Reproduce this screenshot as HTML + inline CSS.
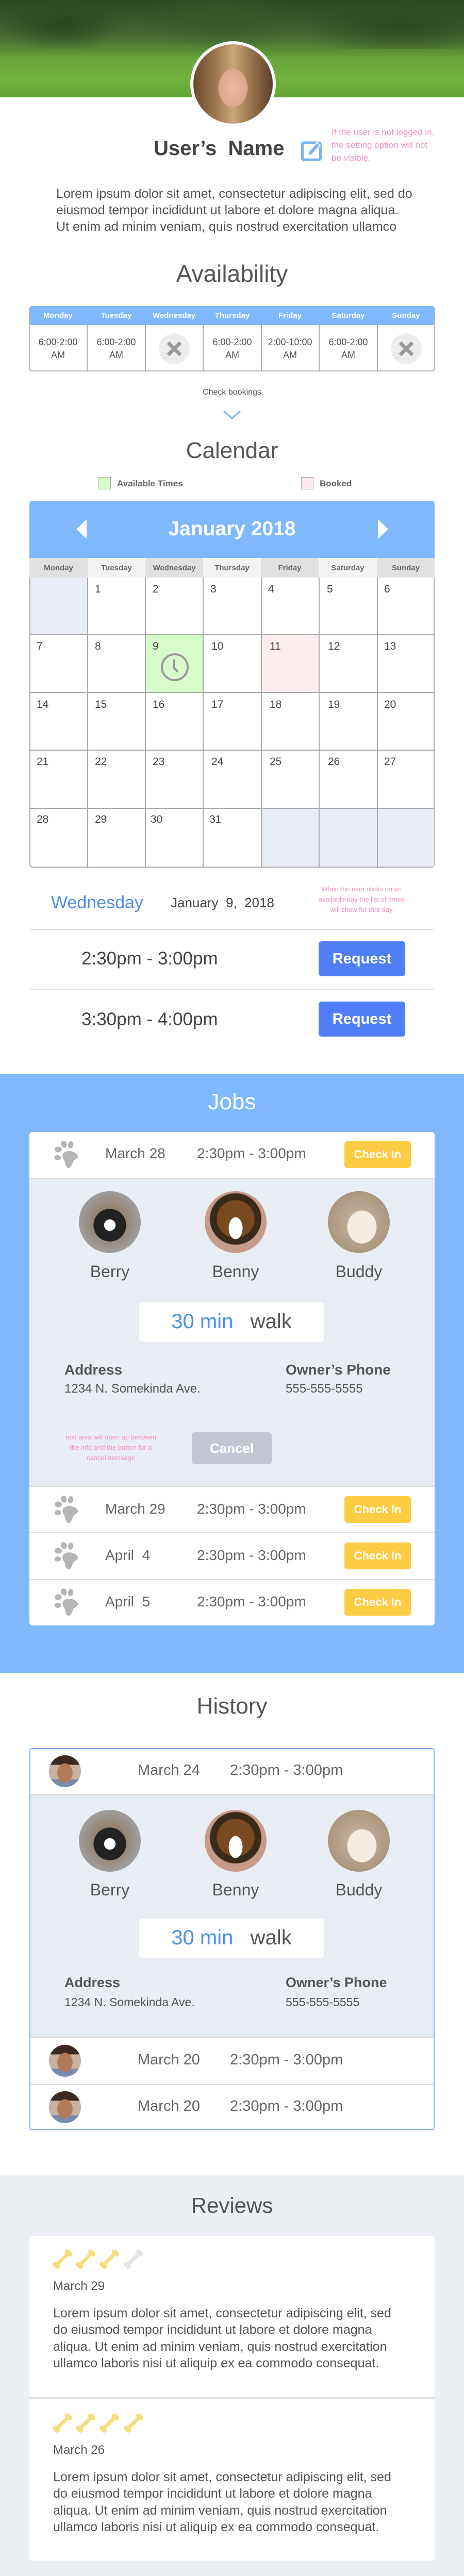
<!DOCTYPE html>
<html><head><meta charset="utf-8">
<style>
*{margin:0;padding:0;box-sizing:border-box}
html,body{width:900px;height:5133px;overflow:hidden}
body{position:relative;background:#fff;font-family:"Liberation Sans",sans-serif;color:#555}
.a{position:absolute}
.t{position:absolute;white-space:nowrap;line-height:1}
.c{left:0;width:900px;text-align:center}
.btn{position:absolute;border-radius:6px;color:#fff;font-weight:bold;text-align:center}
.ci{background:#fdcc44;font-size:22px}
.dog{position:absolute;width:120px;height:120px;border-radius:50%}
.grid div{position:absolute}
</style></head><body>

<div class="a" style="left:0;top:0;width:900px;height:189px;background:linear-gradient(180deg,#2c4a22 0%,#3f6330 30%,#4d7a35 45%,#6aa53b 60%,#6fb23d 80%,#62a536 100%)"></div>
<div class="a" style="left:0;top:0;width:900px;height:95px;background:radial-gradient(ellipse 120px 55px at 120px 45px,#29461d,transparent),radial-gradient(ellipse 160px 60px at 430px 35px,#355a28,transparent),radial-gradient(ellipse 200px 70px at 780px 45px,#2a4a20,transparent)"></div>
<div class="a" style="left:369px;top:80px;width:166px;height:166px;border-radius:50%;background:#fff"></div>
<div class="a" style="left:375px;top:86px;width:154px;height:154px;border-radius:50%;background:radial-gradient(ellipse 40px 52px at 50% 55%,#e8b9a0 0%,#dea58c 70%,transparent 72%),linear-gradient(90deg,#6b4a2c,#a07a52 30%,#c9a877 50%,#a07a52 70%,#5a3e26)"></div>

<div class="t" style="left:298px;top:268px;font-size:40px;font-weight:bold;color:#444">User’s&nbsp; Name</div>
<svg class="a" style="left:584px;top:271px" width="42" height="42" viewBox="0 0 42 42"><rect x="2.5" y="6" width="35" height="33" rx="3" fill="none" stroke="#7ab3f5" stroke-width="5"/><path d="M13 31 L15 23 L31 5 L37 11 L21 29 Z" fill="#7ab3f5" stroke="#fff" stroke-width="2"/></svg>
<div class="t" style="left:643px;top:244px;font-size:17px;line-height:25px;color:#f590c3">If the user is not logged in,<br>the setting option will not<br>be visible.</div>

<div class="t" style="left:109px;top:360px;font-size:25px;line-height:32px;color:#555">Lorem ipsum dolor sit amet, consectetur adipiscing elit, sed do<br>eiusmod tempor incididunt ut labore et dolore magna aliqua.<br>Ut enim ad minim veniam, quis nostrud exercitation ullamco</div>

<div class="t c" style="top:508px;font-size:46px;color:#555">Availability</div>

<div class="a" style="left:56px;top:594px;width:788px;height:127px;border:2px solid #b5b5b5;border-top:none;border-radius:6px;overflow:hidden">
 <div class="a" style="left:0;top:0;width:788px;height:37px;background:#7fb8fd"></div>
</div>
<div class="grid">
<div class="t" style="left:56px;top:605px;width:113px;text-align:center;color:#fff;font-weight:bold;font-size:15px">Monday</div>
<div class="t" style="left:169px;top:605px;width:113px;text-align:center;color:#fff;font-weight:bold;font-size:15px">Tuesday</div>
<div class="t" style="left:281px;top:605px;width:113px;text-align:center;color:#fff;font-weight:bold;font-size:15px">Wednesday</div>
<div class="t" style="left:394px;top:605px;width:113px;text-align:center;color:#fff;font-weight:bold;font-size:15px">Thursday</div>
<div class="t" style="left:506px;top:605px;width:113px;text-align:center;color:#fff;font-weight:bold;font-size:15px">Friday</div>
<div class="t" style="left:619px;top:605px;width:113px;text-align:center;color:#fff;font-weight:bold;font-size:15px">Saturday</div>
<div class="t" style="left:731px;top:605px;width:113px;text-align:center;color:#fff;font-weight:bold;font-size:15px">Sunday</div>
<div style="left:168px;top:631px;width:2px;height:89px;background:#aaa"></div>
<div style="left:281px;top:631px;width:2px;height:89px;background:#aaa"></div>
<div style="left:393px;top:631px;width:2px;height:89px;background:#aaa"></div>
<div style="left:506px;top:631px;width:2px;height:89px;background:#aaa"></div>
<div style="left:618px;top:631px;width:2px;height:89px;background:#aaa"></div>
<div style="left:731px;top:631px;width:2px;height:89px;background:#aaa"></div>
<div class="t" style="left:56px;top:652px;width:113px;text-align:center;font-size:18px;line-height:25px;color:#555">6:00-2:00<br>AM</div>
<div class="t" style="left:169px;top:652px;width:113px;text-align:center;font-size:18px;line-height:25px;color:#555">6:00-2:00<br>AM</div>
<div class="t" style="left:394px;top:652px;width:113px;text-align:center;font-size:18px;line-height:25px;color:#555">6:00-2:00<br>AM</div>
<div class="t" style="left:506px;top:652px;width:113px;text-align:center;font-size:18px;line-height:25px;color:#555">2:00-10:00<br>AM</div>
<div class="t" style="left:619px;top:652px;width:113px;text-align:center;font-size:18px;line-height:25px;color:#555">6:00-2:00<br>AM</div>
</div>
<svg class="a" style="left:307px;top:646px" width="62" height="62"><circle cx="31" cy="31" r="30" fill="#ececec"/><path d="M19 19 L43 43 M43 19 L19 43" stroke="#999" stroke-width="7"/></svg>
<svg class="a" style="left:757px;top:646px" width="62" height="62"><circle cx="31" cy="31" r="30" fill="#ececec"/><path d="M19 19 L43 43 M43 19 L19 43" stroke="#999" stroke-width="7"/></svg>

<div class="t c" style="top:754px;font-size:16px;color:#555">Check bookings</div>
<svg class="a" style="left:432px;top:796px" width="36" height="20"><path d="M2 2 L18 16 L34 2" fill="none" stroke="#7ab3f5" stroke-width="3"/></svg>

<div class="t c" style="top:853px;font-size:44px;color:#555">Calendar</div>
<div class="a" style="left:191px;top:926px;width:24px;height:24px;background:#d5fcc9;border:1.5px solid #aaa"></div>
<div class="t" style="left:227px;top:930px;font-size:17px;font-weight:bold;color:#666">Available Times</div>
<div class="a" style="left:584px;top:926px;width:24px;height:24px;background:#fdeaec;border:1.5px solid #aaa"></div>
<div class="t" style="left:620px;top:930px;font-size:17px;font-weight:bold;color:#666">Booked</div>

<div class="a" style="left:57px;top:972px;width:786px;height:111px;background:#7fb8fd;border-radius:6px 6px 0 0"></div>
<svg class="a" style="left:148px;top:1008px" width="22" height="38"><path d="M20 0 L0 19 L20 38 Z" fill="#fff"/></svg>
<svg class="a" style="left:731px;top:1008px" width="22" height="38"><path d="M2 0 L22 19 L2 38 Z" fill="#fff"/></svg>
<div class="t c" style="top:1007px;font-size:39px;font-weight:bold;color:#fff">January 2018</div>
<div class="grid" style="font-size:15px;font-weight:bold;color:#666">
<div style="left:57px;top:1083px;width:113px;height:38px;background:#e0e0e0"></div>
<div style="left:170px;top:1083px;width:112px;height:38px;background:#f3f3f3"></div>
<div style="left:282px;top:1083px;width:112px;height:38px;background:#e0e0e0"></div>
<div style="left:394px;top:1083px;width:112px;height:38px;background:#f3f3f3"></div>
<div style="left:506px;top:1083px;width:112px;height:38px;background:#e0e0e0"></div>
<div style="left:618px;top:1083px;width:113px;height:38px;background:#f3f3f3"></div>
<div style="left:731px;top:1083px;width:112px;height:38px;background:#e0e0e0"></div>
<div class="t" style="left:57px;top:1095px;width:113px;text-align:center">Monday</div>
<div class="t" style="left:170px;top:1095px;width:112px;text-align:center">Tuesday</div>
<div class="t" style="left:282px;top:1095px;width:112px;text-align:center">Wednesday</div>
<div class="t" style="left:394px;top:1095px;width:112px;text-align:center">Thursday</div>
<div class="t" style="left:506px;top:1095px;width:112px;text-align:center">Friday</div>
<div class="t" style="left:618px;top:1095px;width:113px;text-align:center">Saturday</div>
<div class="t" style="left:731px;top:1095px;width:112px;text-align:center">Sunday</div>
</div>
<div class="a" style="left:57px;top:1121px;width:786px;height:563px;border:2px solid #aaa;border-top:none;border-radius:0 0 6px 6px"></div>
<div class="grid">
<div style="left:59px;top:1121px;width:110px;height:111px;background:#e8ecf4"></div>
<div style="left:282px;top:1233px;width:111px;height:111px;background:#d5fcc9"></div>
<div style="left:507px;top:1233px;width:111px;height:111px;background:#fdeced"></div>
<div style="left:507px;top:1570px;width:335px;height:112px;background:#e8ecf4"></div>
<div style="left:169px;top:1121px;width:2px;height:562px;background:#aaa"></div>
<div style="left:281px;top:1121px;width:2px;height:562px;background:#aaa"></div>
<div style="left:393px;top:1121px;width:2px;height:562px;background:#aaa"></div>
<div style="left:506px;top:1121px;width:2px;height:562px;background:#aaa"></div>
<div style="left:618px;top:1121px;width:2px;height:562px;background:#aaa"></div>
<div style="left:731px;top:1121px;width:2px;height:562px;background:#aaa"></div>
<div style="left:57px;top:1231px;width:786px;height:2px;background:#aaa"></div>
<div style="left:57px;top:1343px;width:786px;height:2px;background:#aaa"></div>
<div style="left:57px;top:1455px;width:786px;height:2px;background:#aaa"></div>
<div style="left:57px;top:1568px;width:786px;height:2px;background:#aaa"></div>
</div>
<svg class="a" style="left:311px;top:1267px" width="56" height="56"><circle cx="28" cy="28" r="25" fill="none" stroke="#999" stroke-width="4"/><path d="M27 13 L27 30 L34 37" fill="none" stroke="#999" stroke-width="4"/></svg>
<div class="grid" style="font-size:21px;color:#444">
<div class="t" style="left:184px;top:1133px">1</div><div class="t" style="left:296px;top:1133px">2</div><div class="t" style="left:408px;top:1133px">3</div><div class="t" style="left:520px;top:1133px">4</div><div class="t" style="left:634px;top:1133px">5</div><div class="t" style="left:745px;top:1133px">6</div>
<div class="t" style="left:71px;top:1244px">7</div><div class="t" style="left:184px;top:1244px">8</div><div class="t" style="left:296px;top:1244px">9</div><div class="t" style="left:410px;top:1244px">10</div><div class="t" style="left:523px;top:1244px">11</div><div class="t" style="left:636px;top:1244px">12</div><div class="t" style="left:745px;top:1244px">13</div>
<div class="t" style="left:71px;top:1357px">14</div><div class="t" style="left:184px;top:1357px">15</div><div class="t" style="left:296px;top:1357px">16</div><div class="t" style="left:410px;top:1357px">17</div><div class="t" style="left:523px;top:1357px">18</div><div class="t" style="left:636px;top:1357px">19</div><div class="t" style="left:745px;top:1357px">20</div>
<div class="t" style="left:71px;top:1468px">21</div><div class="t" style="left:184px;top:1468px">22</div><div class="t" style="left:296px;top:1468px">23</div><div class="t" style="left:410px;top:1468px">24</div><div class="t" style="left:523px;top:1468px">25</div><div class="t" style="left:636px;top:1468px">26</div><div class="t" style="left:745px;top:1468px">27</div>
<div class="t" style="left:71px;top:1580px">28</div><div class="t" style="left:184px;top:1580px">29</div><div class="t" style="left:292px;top:1580px">30</div><div class="t" style="left:406px;top:1580px">31</div>
</div>

<div class="t" style="left:99px;top:1735px;font-size:34px;color:#4a90e2">Wednesday</div>
<div class="t" style="left:331px;top:1739px;font-size:26px;color:#444">January&nbsp; 9,&nbsp; 2018</div>
<div class="t" style="left:590px;top:1716px;width:222px;text-align:center;font-size:13px;line-height:20px;color:#f590c3">When the user clicks on an<br>available day the list of times<br>will show for that day</div>
<div class="a" style="left:58px;top:1803px;width:783px;height:2px;background:#e2e2e2"></div>
<div class="t" style="left:158px;top:1843px;font-size:35px;color:#444">2:30pm - 3:00pm</div>
<div class="btn" style="left:618px;top:1827px;width:168px;height:68px;background:#4f7ef5;font-size:29px;line-height:68px">Request</div>
<div class="a" style="left:57px;top:1919px;width:786px;height:2px;background:#e2e2e2"></div>
<div class="t" style="left:158px;top:1961px;font-size:35px;color:#444">3:30pm - 4:00pm</div>
<div class="btn" style="left:618px;top:1944px;width:168px;height:68px;background:#4f7ef5;font-size:29px;line-height:68px">Request</div>

<div class="a" style="left:0;top:2085px;width:900px;height:1162px;background:#7fb8fd"></div>
<div class="t c" style="top:2117px;font-size:44px;color:#fff">Jobs</div>
<div class="a" style="left:57px;top:2197px;width:786px;height:958px;background:#fff;border-radius:6px;overflow:hidden">
 <div class="a" style="left:0;top:89px;width:786px;height:600px;background:#e8ecf3;border-top:2px solid #e0e0e0;border-bottom:2px solid #e0e0e0"></div>
 <div class="a" style="left:0;top:777px;width:786px;height:2px;background:#e2e2e2"></div>
 <div class="a" style="left:0;top:868px;width:786px;height:2px;background:#e2e2e2"></div>
</div>

<svg width="0" height="0" style="position:absolute;left:0;top:0"><defs><g id="paw" fill="#b5b5b5"><ellipse cx="14" cy="18" rx="7" ry="5.5"/><ellipse cx="25" cy="8" rx="5.5" ry="7" transform="rotate(-15 25 8)"/><ellipse cx="38" cy="9" rx="5" ry="7" transform="rotate(10 38 9)"/><ellipse cx="13" cy="34" rx="6.5" ry="5"/><path d="M26 24 C34 18 48 22 52 30 C54 34 48 36 44 40 C40 46 40 54 34 54 C28 54 28 44 26 40 C22 34 20 28 26 24 Z"/></g><g id="bone"><path d="M7 29 L29 7" stroke-width="7" stroke-linecap="round"/><circle cx="4" cy="28" r="4.5"/><circle cx="8" cy="32" r="4.5"/><circle cx="28" cy="4" r="4.5"/><circle cx="32" cy="8" r="4.5"/></g></defs></svg>
<svg class="a" style="left:99px;top:2213px" width="56" height="56"><use href="#paw"/></svg>
<div class="t" style="left:204px;top:2225px;font-size:28px;color:#666">March 28</div>
<div class="t" style="left:382px;top:2225px;font-size:28px;color:#666">2:30pm - 3:00pm</div>
<div class="btn ci" style="left:668px;top:2215px;width:129px;height:52px;line-height:52px">Check In</div>

<div class="dog" style="left:153px;top:2312px;background:radial-gradient(circle at 50% 55%,#fff 0 12%,#222 13% 35%,transparent 36%),radial-gradient(circle at 50% 50%,#8a6a4a,#a7b3c0)"></div>
<div class="dog" style="left:397px;top:2312px;background:radial-gradient(ellipse 22px 35px at 50% 60%,#fff 0 60%,transparent 62%),radial-gradient(circle at 50% 45%,#7a4a22 0 40%,#3a2a1a 42% 55%,#c79b8a 57%)"></div>
<div class="dog" style="left:636px;top:2312px;background:radial-gradient(ellipse 40px 45px at 55% 58%,#f3ece0 0 70%,transparent 72%),radial-gradient(circle at 50% 50%,#c8b8a0,#9c8a70)"></div>
<div class="t" style="left:143px;top:2452px;width:140px;text-align:center;font-size:32px;color:#555">Berry</div>
<div class="t" style="left:387px;top:2452px;width:140px;text-align:center;font-size:32px;color:#555">Benny</div>
<div class="t" style="left:626px;top:2452px;width:140px;text-align:center;font-size:32px;color:#555">Buddy</div>
<div class="a" style="left:270px;top:2527px;width:358px;height:77px;background:#fff;border-radius:6px"></div>
<div class="t" style="left:270px;top:2545px;width:358px;text-align:center;font-size:40px;color:#555"><span style="color:#4a90e2">30 min</span>&nbsp;&nbsp; walk</div>

<div class="t" style="left:125px;top:2645px;font-size:28px;font-weight:bold;color:#555">Address</div>
<div class="t" style="left:554px;top:2645px;font-size:28px;font-weight:bold;color:#555">Owner’s Phone</div>
<div class="t" style="left:125px;top:2684px;font-size:24px;color:#555">1234 N. Somekinda Ave.</div>
<div class="t" style="left:554px;top:2684px;font-size:24px;color:#555">555-555-5555</div>
<div class="t" style="left:100px;top:2780px;width:230px;text-align:center;font-size:13px;line-height:20px;color:#f590c3">text area will open up between<br>the info and the button for a<br>cancel message</div>
<div class="btn" style="left:372px;top:2780px;width:155px;height:62px;background:#c3c7d4;font-size:26px;line-height:62px">Cancel</div>

<svg class="a" style="left:99px;top:2902px" width="56" height="56"><use href="#paw"/></svg>
<div class="t" style="left:204px;top:2915px;font-size:28px;color:#666">March 29</div>
<div class="t" style="left:382px;top:2915px;font-size:28px;color:#666">2:30pm - 3:00pm</div>
<div class="btn ci" style="left:668px;top:2904px;width:129px;height:52px;line-height:52px">Check In</div>
<svg class="a" style="left:99px;top:2992px" width="56" height="56"><use href="#paw"/></svg>
<div class="t" style="left:204px;top:3005px;font-size:28px;color:#666">April&nbsp; 4</div>
<div class="t" style="left:382px;top:3005px;font-size:28px;color:#666">2:30pm - 3:00pm</div>
<div class="btn ci" style="left:668px;top:2994px;width:129px;height:52px;line-height:52px">Check In</div>
<svg class="a" style="left:99px;top:3082px" width="56" height="56"><use href="#paw"/></svg>
<div class="t" style="left:204px;top:3095px;font-size:28px;color:#666">April&nbsp; 5</div>
<div class="t" style="left:382px;top:3095px;font-size:28px;color:#666">2:30pm - 3:00pm</div>
<div class="btn ci" style="left:668px;top:3084px;width:129px;height:52px;line-height:52px">Check In</div>

<div class="t c" style="top:3290px;font-size:44px;color:#555">History</div>
<div class="a" style="left:57px;top:3393px;width:786px;height:742px;border:2px solid #7ab3f5;border-radius:5px;overflow:hidden;background:#fff">
 <div class="a" style="left:0;top:87px;width:786px;height:474px;background:#e8ecf3;border-top:2px solid #e0e0e0;border-bottom:2px solid #e0e0e0"></div>
 <div class="a" style="left:0;top:650px;width:786px;height:2px;background:#e2e2e2"></div>
</div>
<div class="a" style="left:95px;top:3407px;width:62px;height:62px;border-radius:50%;background:radial-gradient(ellipse 16px 20px at 50% 55%,#b07a5a 0 90%,transparent 95%),linear-gradient(180deg,#3a2a22 0 30%,#c9b0a0 30% 75%,#7a8aa8 75%)"></div>
<div class="t" style="left:267px;top:3422px;font-size:29px;color:#666">March 24</div>
<div class="t" style="left:446px;top:3422px;font-size:29px;color:#666">2:30pm - 3:00pm</div>
<div class="dog" style="left:153px;top:3513px;background:radial-gradient(circle at 50% 55%,#fff 0 12%,#222 13% 35%,transparent 36%),radial-gradient(circle at 50% 50%,#8a6a4a,#a7b3c0)"></div>
<div class="dog" style="left:397px;top:3513px;background:radial-gradient(ellipse 22px 35px at 50% 60%,#fff 0 60%,transparent 62%),radial-gradient(circle at 50% 45%,#7a4a22 0 40%,#3a2a1a 42% 55%,#c79b8a 57%)"></div>
<div class="dog" style="left:636px;top:3513px;background:radial-gradient(ellipse 40px 45px at 55% 58%,#f3ece0 0 70%,transparent 72%),radial-gradient(circle at 50% 50%,#c8b8a0,#9c8a70)"></div>
<div class="t" style="left:143px;top:3652px;width:140px;text-align:center;font-size:32px;color:#555">Berry</div>
<div class="t" style="left:387px;top:3652px;width:140px;text-align:center;font-size:32px;color:#555">Benny</div>
<div class="t" style="left:626px;top:3652px;width:140px;text-align:center;font-size:32px;color:#555">Buddy</div>
<div class="a" style="left:270px;top:3724px;width:358px;height:76px;background:#fff;border-radius:6px"></div>
<div class="t" style="left:270px;top:3741px;width:358px;text-align:center;font-size:40px;color:#555"><span style="color:#4a90e2">30 min</span>&nbsp;&nbsp; walk</div>
<div class="t" style="left:125px;top:3835px;font-size:27px;font-weight:bold;color:#555">Address</div>
<div class="t" style="left:554px;top:3835px;font-size:27px;font-weight:bold;color:#555">Owner’s Phone</div>
<div class="t" style="left:125px;top:3875px;font-size:23px;color:#555">1234 N. Somekinda Ave.</div>
<div class="t" style="left:554px;top:3875px;font-size:23px;color:#555">555-555-5555</div>
<div class="a" style="left:95px;top:3969px;width:62px;height:62px;border-radius:50%;background:radial-gradient(ellipse 16px 20px at 50% 55%,#b07a5a 0 90%,transparent 95%),linear-gradient(180deg,#3a2a22 0 30%,#c9b0a0 30% 75%,#7a8aa8 75%)"></div>
<div class="t" style="left:267px;top:3984px;font-size:29px;color:#666">March 20</div>
<div class="t" style="left:446px;top:3984px;font-size:29px;color:#666">2:30pm - 3:00pm</div>
<div class="a" style="left:95px;top:4059px;width:62px;height:62px;border-radius:50%;background:radial-gradient(ellipse 16px 20px at 50% 55%,#b07a5a 0 90%,transparent 95%),linear-gradient(180deg,#3a2a22 0 30%,#c9b0a0 30% 75%,#7a8aa8 75%)"></div>
<div class="t" style="left:267px;top:4074px;font-size:29px;color:#666">March 20</div>
<div class="t" style="left:446px;top:4074px;font-size:29px;color:#666">2:30pm - 3:00pm</div>

<div class="a" style="left:0;top:4221px;width:900px;height:830px;background:#eceff4"></div>
<div class="t c" style="top:4260px;font-size:42px;color:#555">Reviews</div>
<div class="a" style="left:57px;top:4340px;width:786px;height:630px;background:#fff;border-radius:6px"></div>
<div class="a" style="left:57px;top:4653px;width:786px;height:4px;background:#e2e2e2"></div>
<svg class="a" style="left:103px;top:4367px" width="190" height="40">
<use href="#bone" fill="#f6dd7c" stroke="#f6dd7c"/><use href="#bone" x="45" fill="#f6dd7c" stroke="#f6dd7c"/><use href="#bone" x="91" fill="#f6dd7c" stroke="#f6dd7c"/><use href="#bone" x="138" fill="#e4e4e4" stroke="#e4e4e4"/></svg>
<div class="t" style="left:103px;top:4426px;font-size:24px;color:#555">March 29</div>
<div class="t" style="left:103px;top:4474px;font-size:25px;line-height:32.4px;color:#555">Lorem ipsum dolor sit amet, consectetur adipiscing elit, sed<br>do eiusmod tempor incididunt ut labore et dolore magna<br>aliqua. Ut enim ad minim veniam, quis nostrud exercitation<br>ullamco laboris nisi ut aliquip ex ea commodo consequat.</div>
<svg class="a" style="left:103px;top:4685px" width="190" height="40">
<use href="#bone" fill="#f6dd7c" stroke="#f6dd7c"/><use href="#bone" x="45" fill="#f6dd7c" stroke="#f6dd7c"/><use href="#bone" x="91" fill="#f6dd7c" stroke="#f6dd7c"/><use href="#bone" x="138" fill="#f6dd7c" stroke="#f6dd7c"/></svg>
<div class="t" style="left:103px;top:4744px;font-size:24px;color:#555">March 26</div>
<div class="t" style="left:103px;top:4792px;font-size:25px;line-height:32.4px;color:#555">Lorem ipsum dolor sit amet, consectetur adipiscing elit, sed<br>do eiusmod tempor incididunt ut labore et dolore magna<br>aliqua. Ut enim ad minim veniam, quis nostrud exercitation<br>ullamco laboris nisi ut aliquip ex ea commodo consequat.</div>

<div class="a" style="left:0;top:5051px;width:900px;height:82px;background:#979797"></div>
<div class="t c" style="top:5084px;font-size:18px;color:#fff">©&nbsp; All rights reserved to thee</div>
</body></html>
